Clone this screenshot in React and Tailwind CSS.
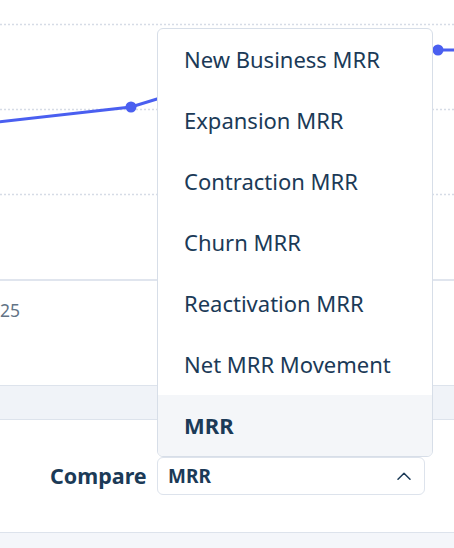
const options = [
  'New Business MRR',
  'Expansion MRR',
  'Contraction MRR',
  'Churn MRR',
  'Reactivation MRR',
  'Net MRR Movement',
  'MRR',
]

function Chart() {
  return (
    <svg width="454" height="279" className="block">
      {[24.5, 109.5, 194.5].map((y) => (
        <line key={y} x1="0" x2="454" y1={y} y2={y} stroke="#d6dce6" strokeWidth="1.5" strokeDasharray="2 2" />
      ))}
      <polyline points="-2,122 131,107 170,95 437,50 456,50" fill="none" stroke="#4a5ff0" strokeWidth="3" />
      <circle cx="131" cy="107" r="5.5" fill="#4a5ff0" />
      <circle cx="438" cy="50" r="5.5" fill="#4a5ff0" />
    </svg>
  )
}

export default function App() {
  return (
    <div
      className="relative w-[454px] h-[548px] overflow-hidden bg-white text-[#1b3a57]"
      style={{ fontFamily: '"Noto Sans", "Open Sans", sans-serif' }}
    >
      {/* chart */}
      <Chart />
      <div className="h-[106px] border-t-2 border-[#e0e5ee] pt-[16px]">
        <span className="text-[17.5px] text-[#627486]">25</span>
      </div>
      {/* divider band */}
      <div className="h-[35px] bg-[#f0f3f8] border-y border-[#dde3ec]" />
      {/* compare row */}
      <div className="h-[112px] flex items-start pt-[37px]">
        <div className="flex items-center">
          <span className="ml-[50px] w-[107px] text-[21.5px] font-bold">Compare</span>
          <button className="w-[268px] h-[38px] flex items-center justify-between pl-[10px] pr-[13px] border border-[#dde3ec] rounded-md bg-white">
            <span className="text-[19px] font-bold">MRR</span>
            <svg width="14" height="8" viewBox="0 0 14 8" className="text-[#1b3a57]">
              <polyline points="1,7.2 7,1.2 13,7.2" fill="none" stroke="currentColor" strokeWidth="1.5" strokeLinecap="round" strokeLinejoin="round" />
            </svg>
          </button>
        </div>
      </div>
      <div className="h-[16px] bg-[#f4f6fa] border-t border-[#dde3ec]" />

      {/* dropdown menu */}
      <div className="absolute left-[157px] top-[28px] w-[276px] rounded-md border border-[#d7dee8] bg-white overflow-hidden">
        {options.map((o) => {
          const active = o === 'MRR'
          return (
            <div
              key={o}
              className={`h-[61px] flex items-center pl-[26px] text-[22px] ${active ? 'bg-[#f4f6f9] font-bold' : ''}`}
            >
              {o}
            </div>
          )
        })}
      </div>
    </div>
  )
}
